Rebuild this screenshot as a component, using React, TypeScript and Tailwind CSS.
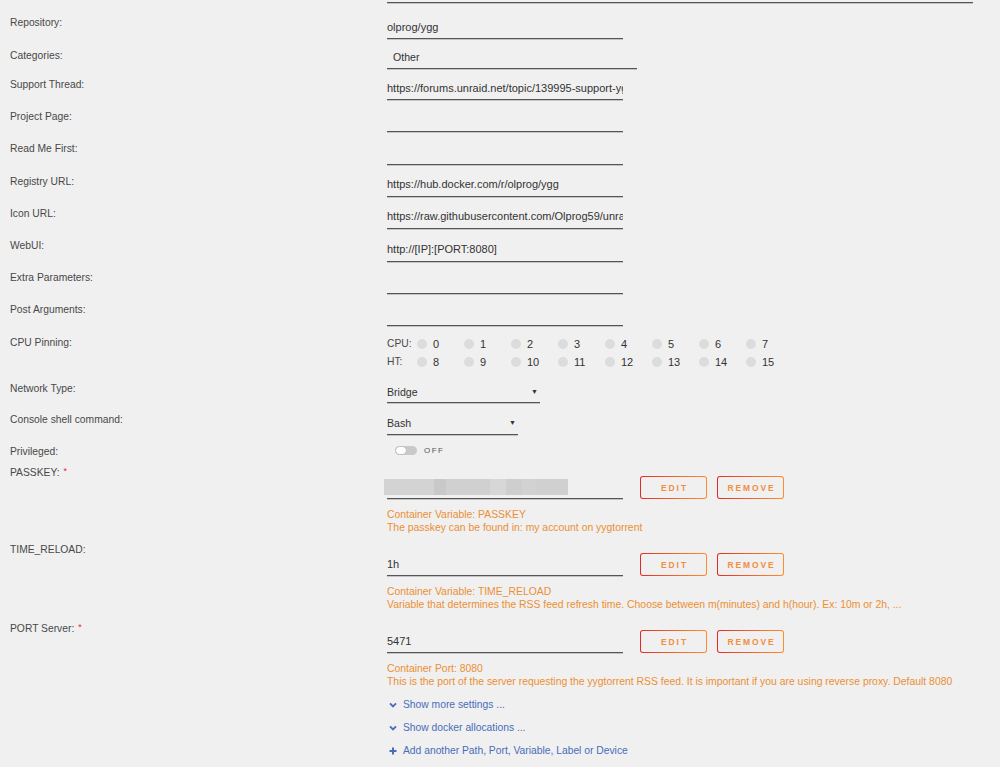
import React from "react";

const line = "border-b border-[#555] shadow-[0_1px_0_#c4c4c4]";

function Label({ children, className }: { children: React.ReactNode; className: string }) {
  return (
    <div className={`mt-[1px] w-[387px] shrink-0 pl-[10px] text-[10.3px] text-[#484848] ${className}`}>
      {children}
    </div>
  );
}

function Req() {
  return <span className="ml-[4px] align-top text-[9px] leading-[10px] text-[#e22828]">*</span>;
}

function Chevron() {
  return (
    <svg width="8" height="8" viewBox="0 0 8 8" className="shrink-0">
      <polyline points="1,2.3 4,5.3 7,2.3" fill="none" stroke="currentColor" strokeWidth="1.9" />
    </svg>
  );
}

function Plus() {
  return (
    <svg width="8" height="8" viewBox="0 0 8 8" className="shrink-0">
      <rect x="3" y="0.5" width="2" height="7" fill="currentColor" />
      <rect x="0.5" y="3" width="7" height="2" fill="currentColor" />
    </svg>
  );
}

function TextRow({
  label,
  value,
  h,
  lp,
  vp,
}: {
  label: string;
  value?: string;
  h: string;
  lp: string;
  vp: string;
}) {
  return (
    <div className={`flex ${h}`}>
      <Label className={lp}>{label}</Label>
      <div className={`w-[236px] overflow-hidden whitespace-nowrap text-[#333] ${vp} ${line}`}>{value}</div>
    </div>
  );
}

function GradButton({ text }: { text: string }) {
  return (
    <div className="h-[23px] w-[67px] rounded-[3px] bg-linear-to-r from-[#e22828] to-[#ff8c2f] p-px">
      <div className="flex h-full w-full items-center justify-center rounded-[2px] bg-[#f0f0f0] pl-[2px] text-[8.5px] font-bold tracking-[1.9px] text-[#f38d40]">
        {text}
      </div>
    </div>
  );
}

function VarRow({
  label,
  req,
  value,
  desc1,
  desc2,
  rowPad,
  lp,
}: {
  label: string;
  req?: boolean;
  value: React.ReactNode;
  desc1: string;
  desc2: string;
  rowPad: string;
  lp: string;
}) {
  return (
    <div className={`flex ${rowPad}`}>
      <Label className={lp}>
        {label}
        {req && <Req />}
      </Label>
      <div className="pt-[13px]">
        <div className="flex">
          <div className={`h-[23px] w-[236px] whitespace-nowrap text-[#333] ${line}`}>{value}</div>
          <div className="ml-[17px] flex gap-[10px]">
            <GradButton text="EDIT" />
            <GradButton text="REMOVE" />
          </div>
        </div>
        <div className="mt-[9px] text-[10.4px] leading-[13px] text-[#ec8f33]">
          <div>{desc1}</div>
          <div>{desc2}</div>
        </div>
      </div>
    </div>
  );
}

// blurred passkey placeholder blocks
const blocks: [number, string][] = [
  [50, "#d3d3d3"],
  [12, "#c9c9c9"],
  [44, "#d0d0d0"],
  [16, "#d7d7d7"],
  [16, "#cecece"],
  [14, "#d2d2d2"],
  [32, "#d0d0d0"],
];

function Cell({ n }: { n: number }) {
  return (
    <div className="flex w-[47px] items-center">
      <span className="h-[10px] w-[10px] rounded-full bg-[#dcdcdc]" />
      <span className="ml-[6px] text-[#333]">{n}</span>
    </div>
  );
}

export default function App() {
  const cpu = [0, 1, 2, 3, 4, 5, 6, 7];
  const ht = [8, 9, 10, 11, 12, 13, 14, 15];
  return (
    <div className="min-h-screen w-[1000px] bg-[#f0f0f0] font-['Liberation_Sans',Arial,sans-serif] text-[11px] leading-[14px]">
      <div className="h-[7px] pt-[2px]">
        <div className="ml-[387px] h-px w-[586px] bg-[#555] shadow-[0_1px_0_#c4c4c4]" />
      </div>

      <TextRow label="Repository:" value="olprog/ygg" h="h-[32px]" lp="pt-[8px]" vp="pt-[13px]" />

      <div className="flex h-[30px]">
        <Label className="pt-[9px]">Categories:</Label>
        <div className={`w-[250px] pl-[6px] pt-[11px] text-[10.6px] text-[#333] ${line}`}>Other</div>
      </div>

      <TextRow
        label="Support Thread:"
        value="https://forums.unraid.net/topic/139995-support-yggtorrent"
        h="h-[31px]"
        lp="pt-[8px]"
        vp="pt-[12px]"
      />
      <TextRow label="Project Page:" h="h-[32px]" lp="pt-[9px]" vp="pt-[12px]" />
      <TextRow label="Read Me First:" h="h-[33px]" lp="pt-[9px]" vp="pt-[12px]" />
      <TextRow
        label="Registry URL:"
        value="https://hub.docker.com/r/olprog/ygg"
        h="h-[32px]"
        lp="pt-[9px]"
        vp="pt-[12px]"
      />
      <TextRow
        label="Icon URL:"
        value="https://raw.githubusercontent.com/Olprog59/unraid-templates/main/ygg.png"
        h="h-[32px]"
        lp="pt-[9px]"
        vp="pt-[12px]"
      />
      <TextRow label="WebUI:" value="http://[IP]:[PORT:8080]" h="h-[33px]" lp="pt-[9px]" vp="pt-[13px]" />
      <TextRow label="Extra Parameters:" h="h-[32px]" lp="pt-[8px]" vp="pt-[12px]" />
      <TextRow label="Post Arguments:" h="h-[32px]" lp="pt-[8px]" vp="pt-[12px]" />

      {/* CPU pinning grid */}
      <div className="flex h-[44px]">
        <Label className="pt-[9px]">CPU Pinning:</Label>
        <div className="flex flex-col gap-[4px] pt-[11px]">
          <div className="flex">
            <span className="w-[30px] text-[10.3px] text-[#484848]">CPU:</span>
            {cpu.map((n) => (
              <Cell key={n} n={n} />
            ))}
          </div>
          <div className="flex">
            <span className="w-[30px] text-[10.3px] text-[#484848]">HT:</span>
            {ht.map((n) => (
              <Cell key={n} n={n} />
            ))}
          </div>
        </div>
      </div>

      <div className="flex h-[33px]">
        <Label className="pt-[11px]">Network Type:</Label>
        <div className={`flex w-[153px] justify-between pr-[2px] pt-[15px] text-[10.6px] text-[#333] ${line}`}>
          <span>Bridge</span>
          <span className="text-[7px] leading-[14px]">▼</span>
        </div>
      </div>

      <div className="flex h-[32px]">
        <Label className="pt-[9px]">Console shell command:</Label>
        <div className={`flex w-[131px] justify-between pr-[2px] pt-[13px] text-[10.6px] text-[#333] ${line}`}>
          <span>Bash</span>
          <span className="text-[7px] leading-[14px]">▼</span>
        </div>
      </div>

      <div className="flex h-[28px]">
        <Label className="pt-[9px]">Privileged:</Label>
        <div className="flex items-center self-start pt-[11px]">
          <div className="ml-[8px] flex h-[9px] w-[22px] items-center rounded-full bg-[#c9c9c9]">
            <span className="h-[9px] w-[12px] rounded-full border border-[#bdbdbd] bg-white" />
          </div>
          <span className="ml-[7px] text-[8px] leading-[8px] tracking-[1.5px] text-[#555]">OFF</span>
        </div>
      </div>

      <VarRow
        label="PASSKEY:"
        req
        lp="pt-[2px]"
        rowPad="pb-[6px]"
        value={
          <div className="ml-[-3px] mt-[3px] flex h-[16px] blur-[0.6px]">
            {blocks.map(([w, c], i) => (
              <span key={i} style={{ width: w, backgroundColor: c }} className="h-full" />
            ))}
          </div>
        }
        desc1="Container Variable: PASSKEY"
        desc2="The passkey can be found in: my account on yygtorrent"
      />

      <VarRow
        label="TIME_RELOAD:"
        lp="pt-[2px]"
        rowPad="pb-[6px]"
        value={<div className="pt-[4px]">1h</div>}
        desc1="Container Variable: TIME_RELOAD"
        desc2="Variable that determines the RSS feed refresh time. Choose between m(minutes) and h(hour). Ex: 10m or 2h, ..."
      />

      <VarRow
        label="PORT Server:"
        req
        lp="pt-[4px]"
        rowPad="pb-0"
        value={<div className="pt-[4px]">5471</div>}
        desc1="Container Port: 8080"
        desc2="This is the port of the server requesting the yygtorrent RSS feed. It is important if you are using reverse proxy. Default 8080"
      />

      <div className="mt-[10px] flex flex-col gap-[9px] pl-[389px] text-[10.3px] text-[#486dba]">
        <div className="flex items-center gap-[6px]">
          <Chevron />
          <span>Show more settings ...</span>
        </div>
        <div className="flex items-center gap-[6px]">
          <Chevron />
          <span>Show docker allocations ...</span>
        </div>
        <div className="flex items-center gap-[6px]">
          <Plus />
          <span>Add another Path, Port, Variable, Label or Device</span>
        </div>
      </div>
    </div>
  );
}
